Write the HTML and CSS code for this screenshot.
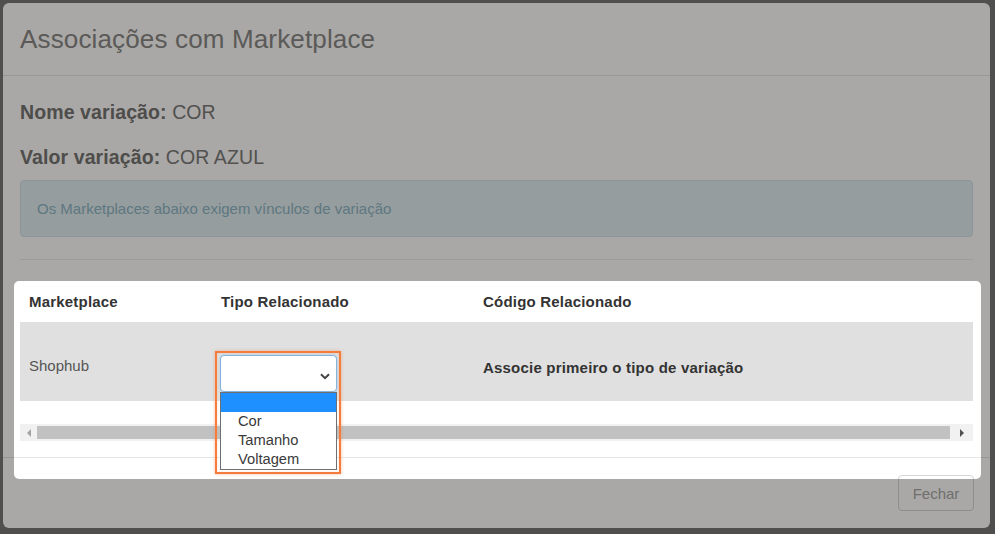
FILE: index.html
```html
<!DOCTYPE html>
<html lang="pt-BR">
<head>
    <meta charset="UTF-8">
    <meta name="viewport" content="width=device-width, initial-scale=1.0">
    <title>Associações com Marketplace</title>
    <link rel="stylesheet" href="styles.css">
</head>
<body>
    <div class="modal">
        <div class="modal-header">
            <h4 class="modal-title">Associações com Marketplace</h4>
        </div>

        <div class="modal-body">
            <p class="info-line"><strong>Nome variação:</strong> COR</p>
            <p class="info-line"><strong>Valor variação:</strong> COR AZUL</p>

            <div class="alert">Os Marketplaces abaixo exigem vínculos de variação</div>

            <hr>

            <!-- Marketplace table -->
            <div class="table-wrap">
                <table>
                    <thead>
                        <tr>
                            <th class="col-market">Marketplace</th>
                            <th class="col-type">Tipo Relacionado</th>
                            <th>Código Relacionado</th>
                        </tr>
                    </thead>
                    <tbody>
                        <tr>
                            <td>Shophub</td>
                            <td class="select-cell">
                                <div class="select-wrap">
                                    <div class="select-box">
                                        <svg class="chevron" width="10" height="7" viewBox="0 0 10 7">
                                            <path d="M1 1.2 L5 5.2 L9 1.2" fill="none" stroke="#444" stroke-width="2"/>
                                        </svg>
                                    </div>
                                    <ul class="select-list">
                                        <li class="selected">&nbsp;</li>
                                        <li>Cor</li>
                                        <li>Tamanho</li>
                                        <li>Voltagem</li>
                                    </ul>
                                    <div class="highlight-ring"></div>
                                </div>
                            </td>
                            <td class="hint">Associe primeiro o tipo de variação</td>
                        </tr>
                    </tbody>
                </table>

                <div class="scrollbar">
                    <span class="arrow arrow-left"></span>
                    <span class="thumb"></span>
                    <span class="arrow arrow-right"></span>
                </div>
            </div>
        </div>

        <div class="modal-footer">
            <button class="btn">Fechar</button>
        </div>
    </div>

    <!-- Tutorial spotlight over the table -->
    <div class="spotlight"></div>
</body>
</html>
```

FILE: styles.css
```css
* {
    margin: 0;
    padding: 0;
    box-sizing: border-box;
}

body {
    font-family: "Liberation Sans", Arial, sans-serif;
    background-color: #777;
    width: 995px;
    height: 534px;
    overflow: hidden;
    position: relative;
}

.modal {
    margin: 3px 5px 0 3px;
    width: 987px;
    background: #fff;
    border-radius: 6px;
}

.modal-header {
    height: 73px;
    padding: 0 17px;
    display: flex;
    align-items: center;
    border-bottom: 1px solid #e5e5e5;
}

.modal-title {
    font-size: 26px;
    font-weight: normal;
    color: #878787;
    line-height: 30px;
    letter-spacing: 0.15px;
}

.modal-body {
    padding: 24px 17px 16px;
}

.info-line {
    font-size: 19.5px;
    line-height: 24px;
    color: #7a7a7a;
    margin-bottom: 21px;
    letter-spacing: 0.1px;
}

.info-line strong {
    color: #737373;
}

.alert {
    margin-top: -10px;
    padding: 17px 16px;
    font-size: 15px;
    line-height: 21px;
    color: #8cb5c6;
    background-color: #e2eef4;
    border: 1px solid #d0e4ec;
    border-radius: 4px;
}

hr {
    border: none;
    border-top: 1px solid #ececec;
    margin: 22px 0 21px;
}

table {
    width: 100%;
    border-collapse: collapse;
    margin-bottom: 23px;
    font-size: 15px;
}

table th {
    text-align: left;
    padding: 10px 9px;
    line-height: 21px;
    color: #333;
    letter-spacing: 0.2px;
}

.col-market {
    width: 192px;
}

.col-type {
    width: 262px;
}

table td {
    vertical-align: top;
    padding: 33px 9px 9px;
    line-height: 21px;
    color: #555;
    background-color: #e0e0e0;
}

table td.select-cell {
    padding-left: 8px;
}

table td.hint {
    padding-top: 35px;
    font-weight: bold;
    color: #333;
    letter-spacing: 0.2px;
}

.select-wrap {
    position: relative;
    width: 117px;
    height: 37px;
}

.select-box {
    height: 37px;
    background: #fff;
    border: 1px solid #86b3de;
    border-radius: 4px;
    box-shadow: 0 0 2px rgba(102, 175, 233, 0.5);
    display: flex;
    align-items: center;
    justify-content: flex-end;
    padding: 6px 6px 0 0;
}

.select-list {
    position: absolute;
    left: 0;
    top: 37px;
    width: 117px;
    list-style: none;
    background: #fff;
    border: 1px solid #6f6f6f;
    z-index: 5;
}

.select-list li {
    height: 19px;
    line-height: 19px;
    padding-left: 17px;
    font-size: 14.7px;
    color: #3a3a3a;
}

.select-list li.selected {
    background-color: #1e90ff;
}

.highlight-ring {
    position: absolute;
    left: -5px;
    top: -4px;
    width: 126px;
    height: 123px;
    border: 2px solid #f47d3e;
    box-shadow: 0 0 3px rgba(244, 125, 62, 0.5), inset 0 0 2px rgba(244, 125, 62, 0.3);
    z-index: 6;
}

.scrollbar {
    height: 17px;
    background-color: #f1f1f1;
    display: flex;
    align-items: center;
    padding: 0 9px 0 7px;
}

.thumb {
    height: 13px;
    margin: 0 10px 0 6px;
    flex: 1;
    background-color: #c1c1c1;
}

.arrow {
    width: 0;
    height: 0;
    border-top: 4px solid transparent;
    border-bottom: 4px solid transparent;
}

.arrow-left {
    border-right: 4px solid #a3a3a3;
}

.arrow-right {
    border-left: 4px solid #505050;
}

.modal-footer {
    border-top: 1px solid #e5e5e5;
    padding: 17px 16px;
    display: flex;
    justify-content: flex-end;
}

.btn {
    width: 76px;
    height: 36px;
    font-family: inherit;
    font-size: 15px;
    color: #a8a8a8;
    background: #fff;
    border: 1px solid #d6d6d6;
    border-radius: 4px;
}

.spotlight {
    position: absolute;
    left: 14px;
    top: 281px;
    width: 967px;
    height: 198px;
    border-radius: 5px;
    box-shadow: 0 0 0 2000px rgba(9, 6, 1, 0.35);
    pointer-events: none;
    z-index: 10;
}
```
